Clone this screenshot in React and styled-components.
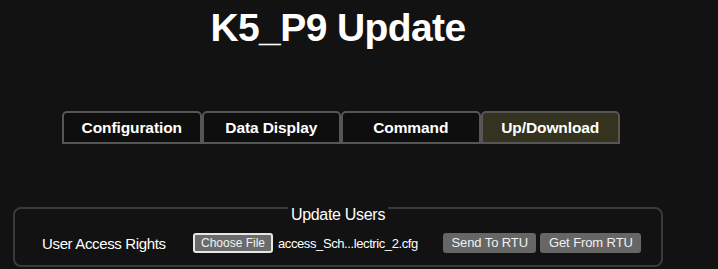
import React from "react";
import styled, { createGlobalStyle } from "styled-components";

const GlobalStyle = createGlobalStyle`
  html, body {
    margin: 0;
    padding: 0;
    background: #121212;
    color: #ffffff;
    font-family: "Liberation Sans", Arial, sans-serif;
  }
  * { box-sizing: border-box; }
`;

const Page = styled.div`
  width: 676px;
  display: flex;
  flex-direction: column;
  align-items: center;
`;

const Title = styled.h1`
  margin: 0;
  padding-top: 6px;
  font-size: 39px;
  line-height: 43px;
  font-weight: 700;
  letter-spacing: -0.6px;
  color: #ffffff;
`;

const TabBar = styled.div`
  display: flex;
  margin-top: 62px;
  margin-left: 6px;
`;

const Tab = styled.div`
  width: 139.5px;
  height: 33px;
  display: flex;
  align-items: center;
  justify-content: center;
  border: 2px solid #565656;
  border-radius: 5px 5px 0 0;
  background: ${(p) => (p.$active ? "#33331f" : "#0e0e0e")};
  color: #ffffff;
  font-size: 15.5px;
  font-weight: 700;
  letter-spacing: -0.1px;
`;

const Fieldset = styled.fieldset`
  width: 650px;
  margin: 47px 13px 0;
  border: 2px solid #3a3a3a;
  border-radius: 8px;
  padding: 0 18px 10px;
  min-width: 0;
`;

const Legend = styled.legend`
  margin: 0 auto;
  padding: 15px 3px 0;
  font-size: 16px;
  line-height: 18px;
  letter-spacing: -0.3px;
  color: #ffffff;
`;

const Row = styled.div`
  display: flex;
  align-items: center;
  height: 24px;
  margin-top: 7px;
  padding-left: 9px;
  white-space: nowrap;
`;

const Label = styled.span`
  flex: 0 0 151px;
  font-size: 15px;
  letter-spacing: -0.35px;
  color: #ffffff;
`;

const ChooseButton = styled.span`
  flex: 0 0 80px;
  display: inline-flex;
  align-items: center;
  justify-content: center;
  height: 20px;
  border: 2px solid #e6e6e6;
  border-radius: 3px;
  background: #6b6b6b;
  color: #f2f2f2;
  font-size: 12px;
`;

const FileName = styled.span`
  flex: 0 0 170px;
  padding-left: 5px;
  font-size: 13px;
  letter-spacing: -0.4px;
  color: #ffffff;
  overflow: hidden;
`;

const ActionButton = styled.button`
  flex: 0 0 auto;
  height: 20px;
  padding: 0 8.5px;
  margin-right: ${(p) => (p.$spaced ? "4px" : "0")};
  border: none;
  border-radius: 3px;
  background: #666666;
  color: #f0f0f0;
  font-family: "Liberation Sans", Arial, sans-serif;
  font-size: 13px;
  letter-spacing: -0.1px;
  line-height: 20px;
  white-space: nowrap;
  cursor: pointer;
`;

const tabs = ["Configuration", "Data Display", "Command", "Up/Download"];

export default function App() {
  return (
    <>
      <GlobalStyle />
      <Page>
        <Title>K5_P9 Update</Title>
        <TabBar>
          {tabs.map((t) => (
            <Tab key={t} $active={t === "Up/Download"}>
              {t}
            </Tab>
          ))}
        </TabBar>
        <Fieldset>
          <Legend>Update Users</Legend>
          <Row>
            <Label>User Access Rights</Label>
            <ChooseButton>Choose File</ChooseButton>
            <FileName>access_Sch...lectric_2.cfg</FileName>
            <ActionButton $spaced>Send To RTU</ActionButton>
            <ActionButton>Get From RTU</ActionButton>
          </Row>
        </Fieldset>
      </Page>
    </>
  );
}
